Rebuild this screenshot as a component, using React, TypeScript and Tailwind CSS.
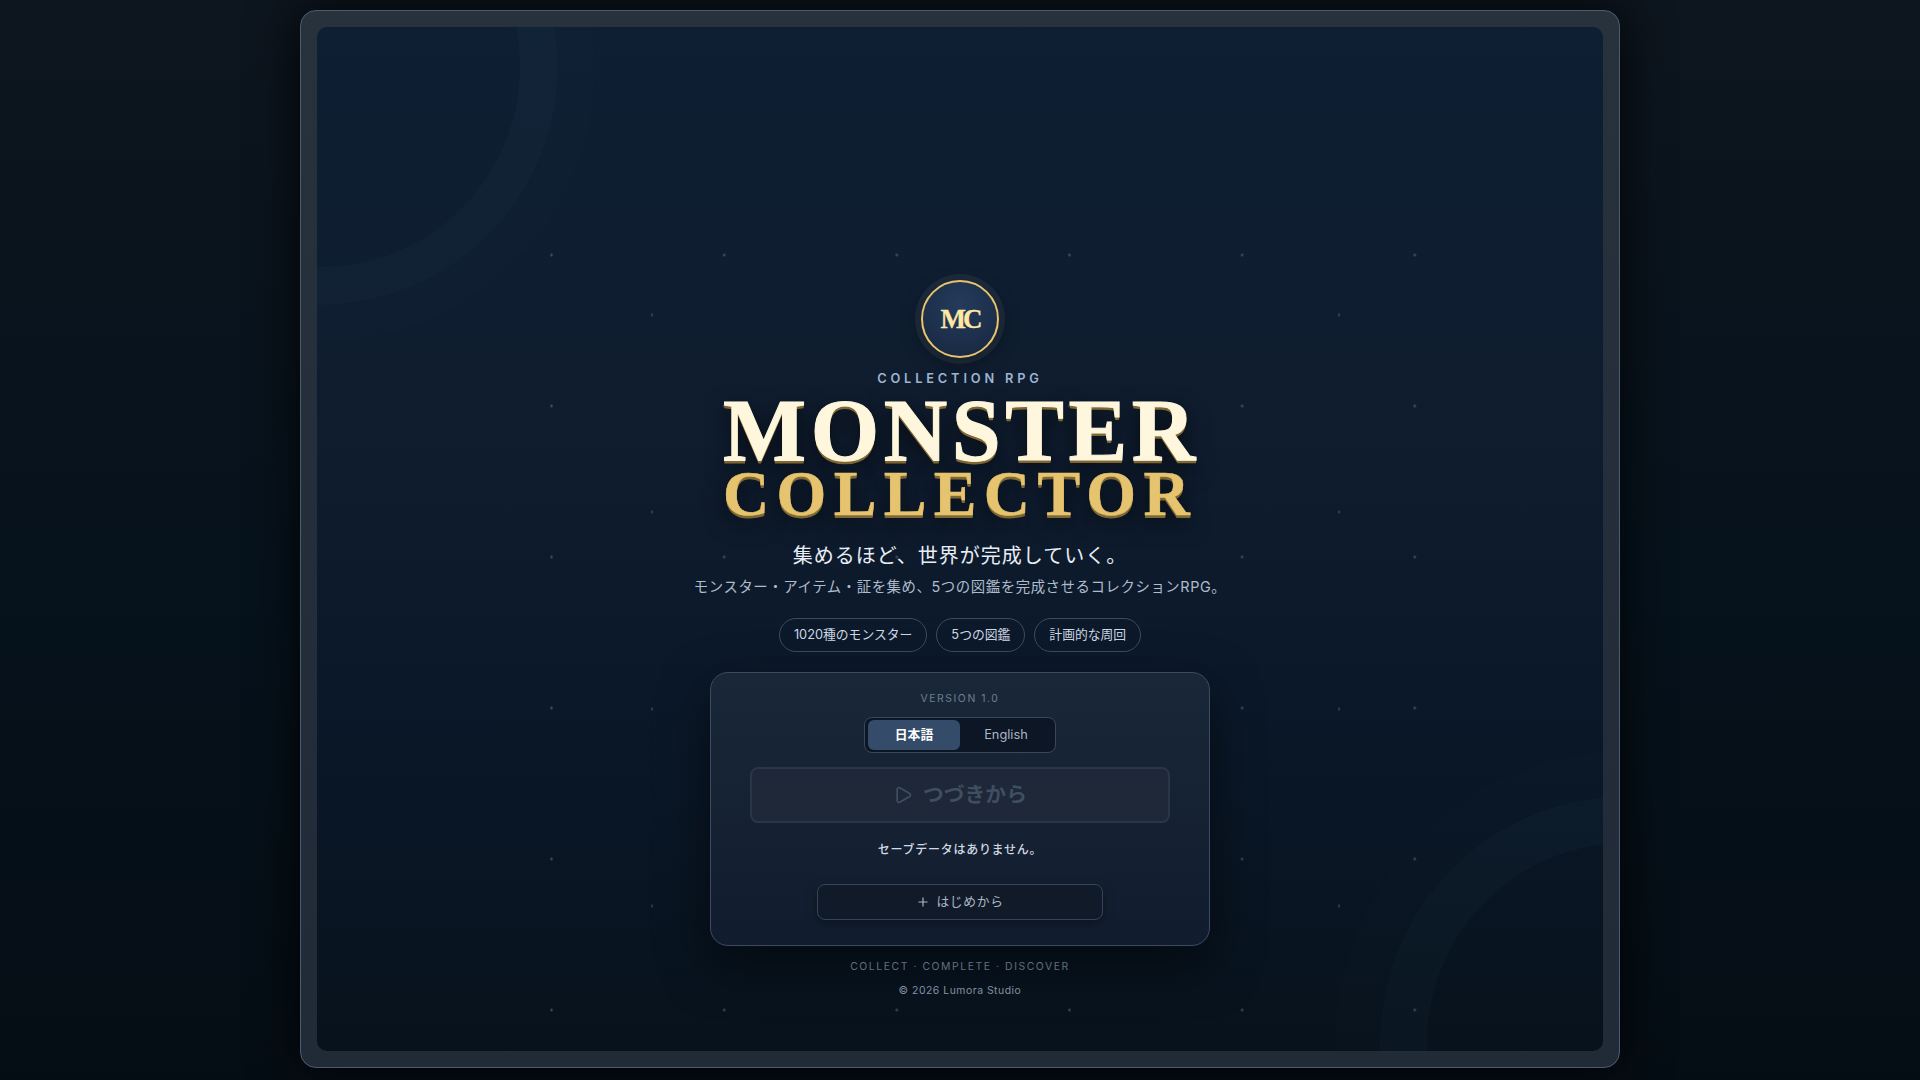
import { Play, Plus } from "lucide-react";

const chips = ["1020種のモンスター", "5つの図鑑", "計画的な周回"];

const App = () => {
  return (
    <div className="h-screen w-full overflow-hidden bg-[linear-gradient(180deg,#0d151e_0%,#06121c_55%,#050d14_100%)] pt-[10px] font-['Inter','Noto_Sans_CJK_JP',sans-serif]">
      {/* Outer frame */}
      <div className="mx-auto h-[1058px] w-[1320px] rounded-[16px] border border-[#4d5b70] bg-[linear-gradient(180deg,#27323d_0%,#212a37_100%)] p-4 shadow-[0_0_50px_rgba(0,0,0,0.85)]">
        {/* Screen */}
        <div className="relative flex h-full flex-col items-center justify-end overflow-hidden rounded-[10px] bg-[linear-gradient(180deg,#0e1f33_0%,#0f1c2e_42%,#0a1727_72%,#07121c_100%)] pb-[52px]">
          {/* Decorative rings */}
          <div className="absolute -left-[235px] -top-[198px] h-[476px] w-[476px] rounded-full border-[38px] border-[#8ea5bd]/[0.03] shadow-[0_0_0_37px_rgba(148,163,184,0.01)]" />
          <div className="absolute -bottom-[239px] -right-[271px] h-[494px] w-[494px] rounded-full border-[47px] border-[#7f9fc4]/[0.035] shadow-[0_0_0_45px_rgba(148,163,184,0.012)]" />

          {/* Star dots */}
          <div className="absolute left-[223px] top-[213px] h-[811px] w-[890px] [background-image:radial-gradient(circle,rgba(148,170,195,0.32)_1px,transparent_1.6px),radial-gradient(circle,rgba(148,170,195,0.26)_1px,transparent_1.6px)] [background-position:-74.83px_-60.5px,-59.75px_-23.5px] [background-size:172.67px_151px,343.5px_197px]" />

          {/* Content */}
          <div className="relative flex flex-col items-center">
            <div className="flex h-[78px] w-[78px] items-center justify-center rounded-full border-2 border-[#e6c36d] bg-[radial-gradient(circle_at_50%_30%,#243b5c_0%,#17263f_100%)] shadow-[0_0_0_6px_rgba(255,255,255,0.06),0_6px_20px_rgba(0,0,0,0.35)]">
              <span className="font-['Liberation_Serif',serif] text-[27px] font-bold leading-none tracking-[-3px] text-[#fde8a6] [-webkit-text-stroke:0.3px_#fde8a6]">
                MC
              </span>
            </div>

            <p className="mt-[13px] text-[12.8px] font-semibold leading-[16px] tracking-[0.3em] text-[#9db4d0]">
              COLLECTION RPG
            </p>

            <h1 className="mt-[2px] flex flex-col items-center font-['Liberation_Serif',serif] font-bold">
              <span className="ml-[3px] text-[88px] leading-[84px] tracking-[0.052em] text-[#fff7dd] [-webkit-text-stroke:1px_#fff7dd] [text-shadow:0_2px_0_#7f6733,0_3px_0_#7f6733,0_8px_22px_rgba(0,0,0,0.7)]">
                MONSTER
              </span>
              <span className="-mt-[11px] text-[64px] leading-[64px] tracking-[0.115em] text-[#e5c36f] [-webkit-text-stroke:0.5px_#e5c36f] [text-shadow:0_2px_0_#7f6733,0_3px_0_#7f6733,0_8px_22px_rgba(0,0,0,0.7)]">
                COLLECTOR
              </span>
            </h1>

            <p className="mt-[15px] text-[20px] leading-[30px] tracking-[0.05em] text-[#e8eef6]">
              集めるほど、世界が完成していく。
            </p>
            <p className="mt-[5px] text-[14.4px] leading-[22px] tracking-[0.04em] text-[#aebccc]">
              モンスター・アイテム・証を集め、5つの図鑑を完成させるコレクションRPG。
            </p>

            <div className="mt-[20px] flex gap-[9px]">
              {chips.map((chip) => (
                <span
                  key={chip}
                  className="flex h-[34px] items-center rounded-full border border-[#3b4b60] px-[14px] text-[12.8px] leading-none text-[#cdd7e2]"
                >
                  {chip}
                </span>
              ))}
            </div>

            {/* Menu card */}
            <div className="mt-[20px] flex h-[274px] w-[500px] flex-col items-center rounded-[18px] border border-[#3b4b60] bg-[linear-gradient(180deg,#1a2739_0%,#111d2e_100%)] px-10 pt-[18px] shadow-[0_18px_50px_rgba(0,0,0,0.5)]">
              <p className="text-[10.4px] leading-[16px] tracking-[0.15em] text-[#6d7e92]">
                VERSION 1.0
              </p>

              <div className="mt-[10px] flex h-[36px] w-[192px] items-center rounded-[8px] border border-[#38485c] bg-[#0c1624] p-[3px]">
                <button className="h-[30px] w-[92px] rounded-[6px] bg-[#344c69] text-[12.8px] font-semibold text-white">
                  日本語
                </button>
                <button className="h-[30px] w-[92px] text-[12.8px] text-[#a8b7c8]">
                  English
                </button>
              </div>

              <button className="mt-[14px] flex h-[56px] w-[420px] shrink-0 items-center justify-center gap-[10px] rounded-[8px] border-2 border-[#28354a] bg-[#1e2838] text-[20.8px] font-bold text-[#3f4f62]">
                <Play size={20} strokeWidth={2} />
                つづきから
              </button>

              <p className="mt-[18px] text-[12px] font-medium leading-[18px] tracking-[0.06em] text-[#d3dae3]">
                セーブデータはありません。
              </p>

              <button className="mt-[25px] flex h-[36px] w-[286px] shrink-0 items-center justify-center gap-[6px] rounded-[8px] border border-[#34445a] bg-[#111a28] text-[12.8px] tracking-[0.05em] text-[#a9b6c5] shadow-[0_4px_12px_rgba(0,0,0,0.35)]">
                <Plus size={14} />
                はじめから
              </button>
            </div>

            <p className="mt-[13px] text-[10.4px] leading-[16px] tracking-[0.15em] text-[#5f6f82]">
              COLLECT · COMPLETE · DISCOVER
            </p>
            <p className="mt-[8px] text-[10.4px] leading-[16px] tracking-[0.05em] text-[#8392a3]">
              © 2026 Lumora Studio
            </p>
          </div>
        </div>
      </div>
    </div>
  );
};

export default App;
